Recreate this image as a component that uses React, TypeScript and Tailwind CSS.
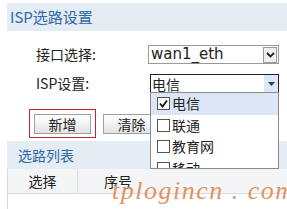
import React from 'react';

const cjk = { fontFamily: '"Noto Sans CJK SC", "DejaVu Sans", sans-serif' };

const Check: React.FC<{ on?: boolean }> = ({ on }) => (
  <span className="w-[13px] h-[13px] border border-[#555] bg-white flex items-center justify-center shrink-0">
    {on && (
      <svg width="11" height="11" viewBox="0 0 11 11">
        <path d="M2 5.5 L4.5 8.5 L9 2.5" stroke="#111" strokeWidth="1.8" fill="none" />
      </svg>
    )}
  </span>
);

const options = [
  { label: '电信', on: true },
  { label: '联通' },
  { label: '教育网' },
  { label: '移动' },
];

export default function App() {
  return (
    <div className="relative w-[287px] h-[209px] overflow-hidden bg-white text-[#222]" style={cjk}>
      <div className="pl-[7px] pt-[3px]">
        <div className="h-[28px] bg-[#e4ecf4] text-[#2f6aa8] text-[15px] pl-[3px] flex items-center">ISP选路设置</div>

        <div className="mt-[14px] flex items-center h-[19px]">
          <div className="w-[141px] pl-[29px] text-[14px]">接口选择:</div>
          <div className="w-[131px] h-[19px] border border-[#9a9a9a] flex items-center justify-between">
            <span className="pl-[2px] text-[15px] leading-none" style={{ fontFamily: '"DejaVu Sans", sans-serif' }}>wan1_eth</span>
            <span className="w-[14px] h-[16px] mr-[1px] border border-[#9a9a9a] bg-[#f0f0f0] flex items-center justify-center">
              <svg width="9" height="6" viewBox="0 0 9 6">
                <path d="M1 1 L4.5 4.5 L8 1" stroke="#222" strokeWidth="1.8" fill="none" />
              </svg>
            </span>
          </div>
        </div>

        <div className="mt-[10px] flex items-center h-[19px]">
          <div className="w-[143px] pl-[29px] text-[14px]">ISP设置:</div>
          <div className="w-[129px] h-[19px] border border-[#222] flex items-center justify-between">
            <span className="pl-[1px] text-[14px] leading-none">电信</span>
            <span className="w-[14px] h-[17px] bg-[#dde8f6] flex items-center justify-center">
              <svg width="7" height="4" viewBox="0 0 7 4">
                <path d="M0 0 L7 0 L3.5 4 Z" fill="#2c3e5a" />
              </svg>
            </span>
          </div>
        </div>

        <div className="mt-[16px] flex items-center h-[29px]">
          <div className="ml-[22px] w-[67px] h-[29px] border border-[#c2272d] flex items-center justify-center">
            <button className="w-[57px] h-[20px] border border-[#a0a0a0] bg-gradient-to-b from-white to-[#e4e4e4] text-[14px] leading-none">新增</button>
          </div>
          <button className="ml-[7px] w-[57px] h-[20px] border border-[#a0a0a0] bg-gradient-to-b from-white to-[#e4e4e4] text-[14px] leading-none">清除</button>
        </div>

        <div className="mt-[3px] h-[28px] bg-[#e4ecf4] text-[#2f6aa8] text-[14px] pl-[11px] flex items-center">选路列表</div>

        <div className="h-[25px] bg-[#f3f5f7] border-b border-l border-[#d5dbe0] flex text-[14px]">
          <div className="w-[70px] border-r border-[#d5dbe0] flex items-center justify-center">选择</div>
          <div className="pl-[26px] flex items-center">序号</div>
        </div>
        <div className="h-[20px] border-l border-[#d5dbe0]" />
      </div>

      <div className="absolute left-[150px] top-[92px] w-[129px] h-[77px] border border-[#8a8a8a] bg-white overflow-hidden">
        {options.map((o) => (
          <div key={o.label} className={`h-[21.5px] flex items-center gap-[2px] pl-[6px] text-[14px] ${o.on ? 'bg-[#dce6f4]' : ''}`}>
            <Check on={o.on} />
            <span>{o.label}</span>
          </div>
        ))}
      </div>

      <div
        className="absolute left-[112px] top-[171px] text-[26px] italic tracking-[1.5px] text-[#e3935f] whitespace-pre"
        style={{ fontFamily: '"Liberation Serif", serif' }}
      >
        tplogincn . com
      </div>
    </div>
  );
}
